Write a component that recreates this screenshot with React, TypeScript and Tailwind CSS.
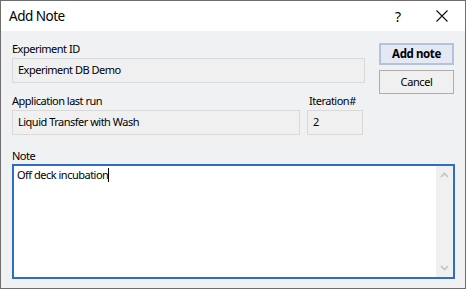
import React from 'react';

const font = { fontFamily: '"Segoe UI", "Noto Sans", "Open Sans", sans-serif' };

const Field: React.FC<{ value: string; className?: string }> = ({ value, className }) => (
    <div className={`h-[25px] border border-[#d9d9d9] bg-[#f0f0f0] flex items-center pl-[5px] text-[11px] text-black ${className ?? ''}`}>
        {value}
    </div>
);

export default function App() {
    return (
        <div className="w-[474px] h-[297px] bg-white" style={font}>
            <div className="w-[466px] h-[289px] border border-[#6e6e6e] flex flex-col">
                {/* title bar */}
                <div className="h-[30px] bg-white flex items-center pl-[8px] shrink-0">
                    <span className="text-[13.5px] tracking-[-0.5px] text-black">Add Note</span>
                    <span className="ml-auto text-[14px] text-black mr-[35px]">?</span>
                    <svg width="12" height="12" viewBox="0 0 12 12" className="mr-[17px]">
                        <path d="M0.5 0.5 L11.5 11.5 M11.5 0.5 L0.5 11.5" stroke="#111" strokeWidth="1.1" />
                    </svg>
                </div>

                {/* body */}
                <div className="flex-1 bg-[#f0f1f3] pl-[11px] pt-[10px] text-[11px] tracking-[-0.5px] text-black">
                    <div className="flex">
                        <div className="w-[353px]">
                            <div className="h-[16px] leading-[16px]">Experiment ID</div>
                            <Field value="Experiment DB Demo" className="mt-[1px]" />
                            <div className="flex mt-[10px]">
                                <div className="w-[288px]">
                                    <div className="h-[16px] leading-[16px]">Application last run</div>
                                    <Field value="Liquid Transfer with Wash" className="mt-[1px] h-[24px]" />
                                </div>
                                <div className="w-[56px] ml-[7px]">
                                    <div className="h-[16px] leading-[16px] pl-[2px]">Iteration#</div>
                                    <Field value="2" className="mt-[1px] h-[24px]" />
                                </div>
                            </div>
                        </div>
                        <div className="ml-[14px] w-[75px] mt-[2px] flex flex-col">
                            <button className="h-[22px] border-2 border-[#b4c3dc] bg-[#e3e8f3] font-bold text-[11.5px] tracking-[-0.4px] text-black">
                                Add note
                            </button>
                            <button className="h-[24px] mt-[5px] border border-[#adadad] bg-[#f0f0f0] text-[11px] tracking-[-0.4px] text-black">
                                Cancel
                            </button>
                        </div>
                    </div>

                    <div className="h-[16px] leading-[16px] mt-[13px]">Note</div>
                    <div className="w-[443px] h-[115px] border-2 border-[#2f6cc6] bg-white flex">
                        <div className="flex-1 pl-[3px] pt-[1px] leading-[16px]">
                            Off deck incubation<span className="inline-block w-px h-[14px] bg-black align-[-3px]" />
                        </div>
                        <div className="w-[17px] bg-[#f0f0f0] flex flex-col items-center justify-between py-[6px]">
                            <svg width="9" height="6" viewBox="0 0 9 6">
                                <path d="M1 5 L4.5 1.5 L8 5" stroke="#c2c2c2" strokeWidth="1.6" fill="none" />
                            </svg>
                            <svg width="9" height="6" viewBox="0 0 9 6">
                                <path d="M1 1 L4.5 4.5 L8 1" stroke="#c2c2c2" strokeWidth="1.6" fill="none" />
                            </svg>
                        </div>
                    </div>
                </div>
            </div>
        </div>
    );
}
